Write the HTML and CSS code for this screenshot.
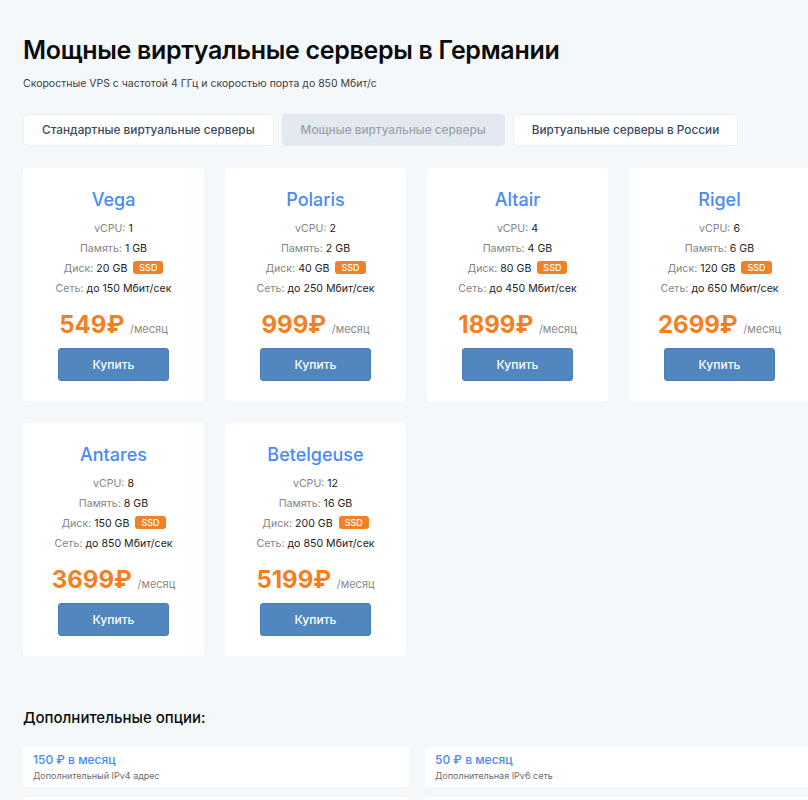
FILE: index.html
```html
<!DOCTYPE html>
<html lang="ru">
<head>
  <meta charset="UTF-8" />
  <meta name="viewport" content="width=device-width, initial-scale=1" />
  <title>Мощные виртуальные серверы в Германии</title>
  <link rel="stylesheet" href="styles.css">
</head>
<body>
  <div class="wrap">
    <h1>Мощные виртуальные серверы в Германии</h1>
    <p class="lead">Скоростные VPS с частотой 4 ГГц и скоростью порта до 850 Мбит/с</p>

    <div class="tabs">
      <a class="tab">Стандартные виртуальные серверы</a>
      <a class="tab active">Мощные виртуальные серверы</a>
      <a class="tab">Виртуальные серверы в России</a>
    </div>

    <div class="plans">
      <div class="plan">
        <h3>Vega</h3>
        <ul>
          <li><span>vCPU:</span> 1</li>
          <li><span>Память:</span> 1 GB</li>
          <li><span>Диск:</span> 20 GB <b class="ssd">SSD</b></li>
          <li><span>Сеть:</span> до 150 Мбит/сек</li>
        </ul>
        <div class="price">549₽ <small>/месяц</small></div>
        <button>Купить</button>
      </div>
      <div class="plan">
        <h3>Polaris</h3>
        <ul>
          <li><span>vCPU:</span> 2</li>
          <li><span>Память:</span> 2 GB</li>
          <li><span>Диск:</span> 40 GB <b class="ssd">SSD</b></li>
          <li><span>Сеть:</span> до 250 Мбит/сек</li>
        </ul>
        <div class="price">999₽ <small>/месяц</small></div>
        <button>Купить</button>
      </div>
      <div class="plan">
        <h3>Altair</h3>
        <ul>
          <li><span>vCPU:</span> 4</li>
          <li><span>Память:</span> 4 GB</li>
          <li><span>Диск:</span> 80 GB <b class="ssd">SSD</b></li>
          <li><span>Сеть:</span> до 450 Мбит/сек</li>
        </ul>
        <div class="price">1899₽ <small>/месяц</small></div>
        <button>Купить</button>
      </div>
      <div class="plan">
        <h3>Rigel</h3>
        <ul>
          <li><span>vCPU:</span> 6</li>
          <li><span>Память:</span> 6 GB</li>
          <li><span>Диск:</span> 120 GB <b class="ssd">SSD</b></li>
          <li><span>Сеть:</span> до 650 Мбит/сек</li>
        </ul>
        <div class="price">2699₽ <small>/месяц</small></div>
        <button>Купить</button>
      </div>
      <div class="plan">
        <h3>Antares</h3>
        <ul>
          <li><span>vCPU:</span> 8</li>
          <li><span>Память:</span> 8 GB</li>
          <li><span>Диск:</span> 150 GB <b class="ssd">SSD</b></li>
          <li><span>Сеть:</span> до 850 Мбит/сек</li>
        </ul>
        <div class="price">3699₽ <small>/месяц</small></div>
        <button>Купить</button>
      </div>
      <div class="plan">
        <h3>Betelgeuse</h3>
        <ul>
          <li><span>vCPU:</span> 12</li>
          <li><span>Память:</span> 16 GB</li>
          <li><span>Диск:</span> 200 GB <b class="ssd">SSD</b></li>
          <li><span>Сеть:</span> до 850 Мбит/сек</li>
        </ul>
        <div class="price">5199₽ <small>/месяц</small></div>
        <button>Купить</button>
      </div>
    </div>

    <h2>Дополнительные опции:</h2>
    <div class="options">
      <div class="option">
        <div class="option-price">150 ₽ в месяц</div>
        <div class="option-name">Дополнительный IPv4 адрес</div>
      </div>
      <div class="option">
        <div class="option-price">50 ₽ в месяц</div>
        <div class="option-name">Дополнительная IPv6 сеть</div>
      </div>
      <div class="option">
        <div class="option-price">300 ₽ в месяц</div>
        <div class="option-name">Резервное копирование</div>
      </div>
      <div class="option">
        <div class="option-price">100 ₽ в месяц</div>
        <div class="option-name">Панель управления</div>
      </div>
    </div>
  </div>
</body>
</html>
```

FILE: styles.css
```css
body {
  margin: 0;
  font-family: Inter, "Noto Sans", sans-serif;
  background-color: #f5f8fb;
  color: #1a1a1a;
}
.wrap {
  width: 788px;
  padding: 33px 0 40px 23px;
}
h1 {
  font-size: 25px;
  font-weight: 600;
  line-height: 34px;
  margin: 0;
  color: #0b0b0b;
  letter-spacing: -0.3px;
}
.lead {
  font-size: 10.5px;
  color: #3c3c3c;
  margin: 9px 0 0;
  line-height: 16px;
}
.tabs {
  display: flex;
  gap: 8px;
  margin-top: 22px;
}
.tab {
  display: block;
  height: 32px;
  line-height: 31px;
  padding: 0 18px;
  background-color: #fff;
  border: 1px solid #edf0f3;
  border-radius: 4px;
  font-size: 11.8px;
  font-weight: 500;
  color: #394a5d;
  box-sizing: border-box;
  cursor: pointer;
}
.tab.active {
  background-color: #e3e9ee;
  color: #9aa3ad;
  border-color: #e3e9ee;
}
.plans {
  display: grid;
  grid-template-columns: repeat(4, 181px);
  column-gap: 21px;
  row-gap: 22px;
  margin-top: 22px;
}
.plan {
  background-color: #fff;
  border-radius: 4px;
  padding: 21px 6px 20px;
  text-align: center;
}
.plan h3 {
  font-size: 18px;
  font-weight: 500;
  line-height: 22px;
  color: #4a8af3;
  margin: 0 0 8px;
}
.plan ul {
  list-style: none;
  margin: 0;
  padding: 0;
}
.plan li {
  font-size: 10.6px;
  line-height: 20px;
  color: #1c1c1c;
}
.plan li span {
  color: #858585;
}
.ssd {
  display: inline-block;
  background-color: #f38025;
  color: #fff;
  font-size: 9px;
  font-weight: 500;
  line-height: 13px;
  padding: 0 6px;
  border-radius: 3px;
  margin-left: 3px;
  vertical-align: 1px;
}
.price {
  margin-top: 11px;
  font-size: 24px;
  font-weight: 700;
  line-height: 30px;
  color: #f47f22;
}
.price small {
  font-size: 11px;
  font-weight: 400;
  color: #8a8a8a;
}
.plan button {
  display: block;
  margin: 4px auto 0;
  width: 111px;
  height: 33px;
  background-color: #5186be;
  border: 1px solid #4a7db3;
  border-radius: 3px;
  color: #fff;
  font-family: inherit;
  font-size: 12px;
  font-weight: 500;
  cursor: pointer;
}
h2 {
  font-size: 15px;
  font-weight: 500;
  line-height: 20px;
  margin: 52px 0 0;
  color: #0b0b0b;
}
.options {
  display: grid;
  grid-template-columns: repeat(2, 386px);
  gap: 10px 16px;
  margin-top: 19px;
}
.option {
  background-color: #fff;
  border-radius: 4px;
  padding: 4px 10px 5px;
}
.option-price {
  font-size: 12px;
  font-weight: 500;
  line-height: 18px;
  color: #4a8af3;
}
.option-name {
  font-size: 9px;
  line-height: 13px;
  color: #6c6c6c;
}
```
